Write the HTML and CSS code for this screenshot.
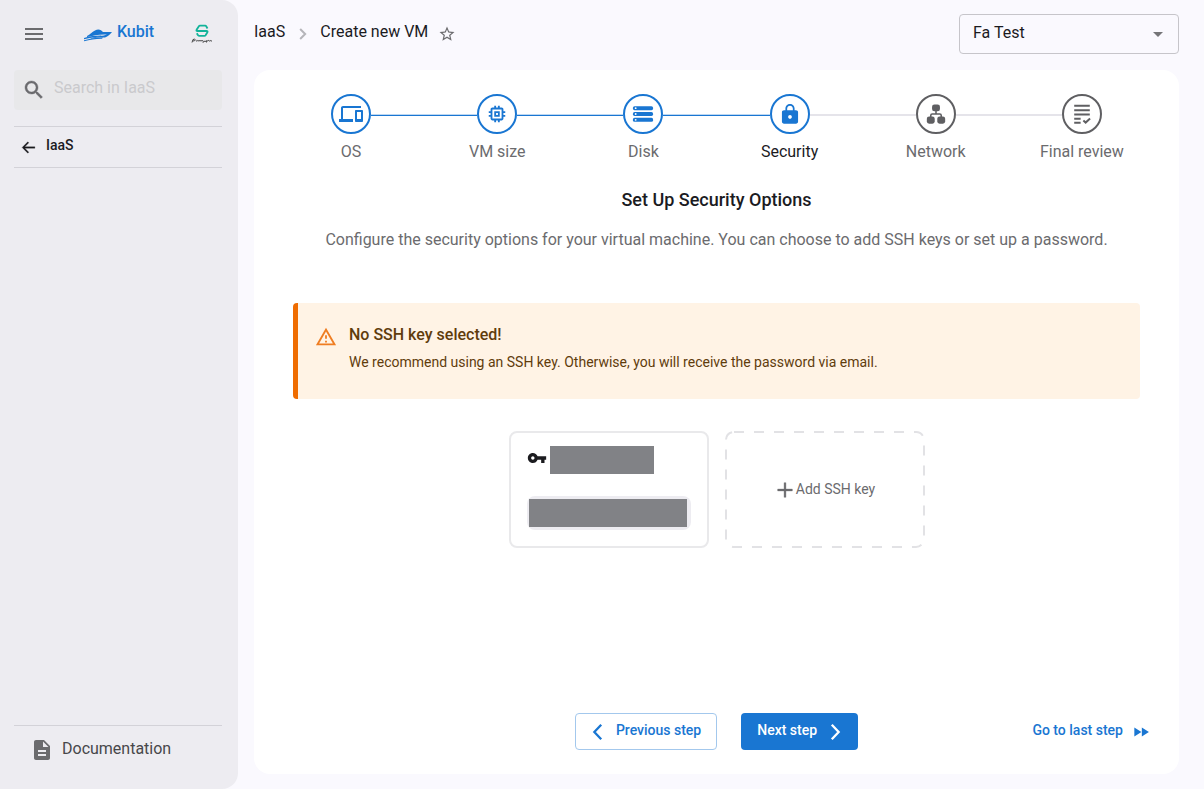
FILE: index.html
```html
<!DOCTYPE html>
<html lang="en">
<head>
<meta charset="utf-8">
<meta name="viewport" content="width=device-width, initial-scale=1">
<title>Create new VM</title>
<link rel="stylesheet" href="styles.css">
</head>
<body>
<div class="app">
  <aside class="sidebar">
    <div class="brand-bar">
      <button class="icon-button" type="button" aria-label="Toggle menu">
        <svg class="icon" viewBox="0 0 24 24"><path d="M3 18h18v-2H3zm0-5h18v-2H3zm0-7v2h18V6z"/></svg>
      </button>
      <a class="brand" href="#">
        <svg class="brand-mark" viewBox="0 0 30 14">
          <path d="M4 8C7 6.500 9 4 12 2.500C14 1.300 16 1 18 2.200L20 4L29 4C27 6.500 25 8.500 22 9.500C17 9.300 12 9.700 7 11L10 9.500C15 8.200 20 8 24 6.500C17 6 10 7.500 4 9Z"/>
          <path d="M1 10C7 8 12 7.600 18 7.500L19 8.400C13 8.500 7 9.700 1 11.200Z"/>
          <path d="M1 12.300C7 10.700 13 9.400 20 9.500L19 10.800C13 10.700 7 11.800 1 13.200Z"/>
        </svg>
        <span>Kubit</span>
      </a>
      <svg class="partner-mark" viewBox="0 0 22 20" role="img" aria-label="Partner">
        <path d="M16.500 4.500L15.200 2.200Q14.900 1.700 14.200 1.700H9Q8.300 1.700 7.900 2.300L5.600 5.800Q5 7 6.400 7H13.200M8.500 7H15.500Q17 7 16.400 8.300L14.600 11.200Q14.200 11.800 13.500 11.800H8Q7.300 11.800 7 11.200L5.800 9.300" fill="none" stroke="#12b39a" stroke-width="1.800"/>
        <path d="M1 18.500L2 15.500Q4 14.700 4.500 15.800Q4 17 2 17M5 17.300Q6.500 15.700 7 17.200Q8 15.800 9 17Q10 16 11 17Q12 16 12.500 17.300L12 18.800M13 17.300H15.500M16 16L15.500 18.500M16.500 17Q18 15.800 18.500 17Q20 16 21 17.300" fill="none" stroke="#333" stroke-width="0.900"/>
      </svg>
    </div>
    <label class="search">
      <svg class="icon" viewBox="0 0 24 24"><path d="M15.500 14h-.79l-.28-.27C15.410 12.590 16 11.110 16 9.500 16 5.910 13.090 3 9.500 3S3 5.910 3 9.500 5.910 16 9.500 16c1.610 0 3.090-.59 4.230-1.570l.27.28v.79l5 4.990L20.490 19zm-6 0C7.010 14 5 11.990 5 9.500S7.010 5 9.500 5 14 7.010 14 9.500 11.990 14 9.500 14" stroke="currentColor" stroke-width="0.400"/></svg>
      <input class="search-input" type="search" placeholder="Search in IaaS" aria-label="Search in IaaS">
    </label>
    <a class="back-link" href="#">
      <svg class="icon icon-back" viewBox="0 0 24 24"><path d="M21 11H6.830l5.580-5.590L11 4l-8 8 8 8 1.410-1.410L6.830 13H21z" stroke="currentColor" stroke-width="0.400"/></svg>
      <span>IaaS</span>
    </a>
    <a class="docs-link" href="#">
      <svg class="icon" viewBox="0 0 24 24"><path d="M14 2H6c-1.100 0-1.990.9-1.990 2L4 20c0 1.100.89 2 1.990 2H18c1.100 0 2-.9 2-2V8zm2 16H8v-2h8zm0-4H8v-2h8zm-3-5V3.500L18.500 9z"/></svg>
      <span>Documentation</span>
    </a>
  </aside>

  <main class="main">
    <header class="topbar">
      <nav class="crumbs" aria-label="Breadcrumb">
        <a href="#">IaaS</a>
        <svg class="icon crumb-sep" viewBox="0 0 24 24"><path d="M8.500 4.500L16 12L8.500 19.500" /></svg>
        <a href="#">Create new VM</a>
        <button class="icon-button star" type="button" aria-label="Add to favourites">
          <svg class="icon" viewBox="0 0 24 24"><path d="m22 9.240-7.190-.62L12 2 9.190 8.630 2 9.240l5.460 4.730L5.820 21 12 17.270 18.180 21l-1.630-7.030zM12 15.400l-3.760 2.270 1-4.280-3.320-2.880 4.380-.38L12 6.100l1.710 4.040 4.380.38-3.320 2.880 1 4.280z"/></svg>
        </button>
      </nav>
      <div class="project">
        <select class="project-select" aria-label="Project"><option>Fa Test</option></select>
        <svg class="icon project-arrow" viewBox="0 0 24 24"><path d="m7 10 5 5 5-5z"/></svg>
      </div>
    </header>

    <section class="card">
      <ol class="stepper">
        <li class="step done">
          <span class="step-circle"><svg class="icon step-icon-wide" viewBox="0 0 24 24"><path d="M4 6h18V4H4c-1.100 0-2 .9-2 2v11H0v3h14v-3H4zm19 2h-6c-.55 0-1 .45-1 1v10c0 .55.450 1 1 1h6c.55 0 1-.45 1-1V9c0-.55-.45-1-1-1m-1 9h-4v-7h4z"/></svg></span>
          <span class="step-label">OS</span>
        </li>
        <li class="step done">
          <span class="step-circle"><svg class="icon" viewBox="0 0 24 24"><path d="M15 9H9v6h6zm-2 4h-2v-2h2zm8-2V9h-2V7c0-1.100-.9-2-2-2h-2V3h-2v2h-2V3H9v2H7c-1.100 0-2 .9-2 2v2H3v2h2v2H3v2h2v2c0 1.100.9 2 2 2h2v2h2v-2h2v2h2v-2h2c1.100 0 2-.9 2-2v-2h2v-2h-2v-2zm-4 6H7V7h10z"/></svg></span>
          <span class="step-label">VM size</span>
        </li>
        <li class="step done">
          <span class="step-circle"><svg class="icon" viewBox="0 0 24 24"><rect x="1" y="3.500" width="22" height="4.300" rx="1.800"/><rect x="1" y="9.850" width="22" height="4.300" rx="1.800"/><rect x="1" y="16.200" width="22" height="4.300" rx="1.800"/><g fill="#fff"><circle cx="4" cy="5.650" r="1"/><circle cx="4" cy="12" r="1"/><circle cx="4" cy="18.350" r="1"/></g></svg></span>
          <span class="step-label">Disk</span>
        </li>
        <li class="step current" aria-current="step">
          <span class="step-circle"><svg class="icon" viewBox="0 0 24 24"><path d="M18.500 8H17V6c0-2.760-2.240-5-5-5S7 3.240 7 6v2H5.500c-1.300 0-2.300.9-2.300 2v10.500c0 1.100 1 2 2.300 2h13c1.300 0 2.300-.9 2.300-2V10c0-1.100-1-2-2.300-2M12 17.200c-1.100 0-2-.9-2-2s.9-2 2-2 2 .9 2 2-.9 2-2 2M15.100 8H8.900V6c0-1.710 1.390-3.100 3.100-3.100s3.100 1.390 3.100 3.100z"/></svg></span>
          <span class="step-label">Security</span>
        </li>
        <li class="step">
          <span class="step-circle"><svg class="icon" viewBox="0 0 24 24"><rect x="7.700" y="1.500" width="8.600" height="7.500" rx="2.500"/><rect x="2" y="14.800" width="8.600" height="7.700" rx="2.500"/><rect x="13.400" y="14.800" width="8.600" height="7.700" rx="2.500"/><path d="M12 8V12M6.300 16V13.500Q6.300 12 7.800 12H16.200Q17.700 12 17.700 13.500V16" fill="none" stroke="currentColor" stroke-width="1.700"/></svg></span>
          <span class="step-label">Network</span>
        </li>
        <li class="step">
          <span class="step-circle"><svg class="icon" viewBox="0 0 24 24"><path d="M3.500 3H20.500M3.500 7.800H20.500M3.500 12.600H20.500M3.500 17.200H10.500M3.500 21.500H10.500M13.500 19L16 21.300L20.800 17" fill="none" stroke="currentColor" stroke-width="2.200"/></svg></span>
          <span class="step-label">Final review</span>
        </li>
      </ol>

      <h1 class="title">Set Up Security Options</h1>
      <p class="lead">Configure the security options for your virtual machine. You can choose to add SSH keys or set up a password.</p>

      <div class="alert" role="status">
        <svg class="icon alert-icon" viewBox="0 0 24 24"><path d="M12 5.990 19.530 19H4.470zM12 2 1 21h22zm1 14h-2v2h2zm0-6h-2v4h2z"/></svg>
        <div>
          <h2 class="alert-title">No SSH key selected!</h2>
          <p class="alert-text">We recommend using an SSH key. Otherwise, you will receive the password via email.</p>
        </div>
      </div>

      <div class="keys">
        <button class="key-card" type="button" aria-label="Saved SSH key">
          <span class="key-head">
            <svg class="icon key-icon" viewBox="0 0 24 24"><path d="M12.650 10C11.830 7.670 9.610 6 7 6c-3.310 0-6 2.690-6 6s2.690 6 6 6c2.610 0 4.830-1.670 5.650-4H17v4h4v-4h2v-4zM7 14c-1.100 0-2-.9-2-2s.9-2 2-2 2 .9 2 2-.9 2-2 2"/></svg>
            <span class="mask mask-name"></span>
          </span>
          <span class="key-chip"><span class="mask"></span></span>
        </button>
        <button class="key-add" type="button">
          <svg class="key-add-outline" aria-hidden="true"><rect class="key-add-rect" x="1" y="1" rx="8"/></svg>
          <svg class="icon key-add-plus" viewBox="0 0 24 24"><path d="M20 13h-7v7h-2v-7H4v-2h7V4h2v7h7z" stroke="currentColor" stroke-width="0.400"/></svg>
          <span>Add SSH key</span>
        </button>
      </div>

      <footer class="actions">
        <div class="actions-main">
          <button class="btn btn-outline" type="button">
            <svg class="icon chevron" viewBox="0 0 24 24"><path d="M15.500 4L8 12L15.500 20"/></svg>
            <span>Previous step</span>
          </button>
          <button class="btn btn-solid" type="button">
            <span>Next step</span>
            <svg class="icon chevron" viewBox="0 0 24 24"><path d="M8.500 4L16 12L8.500 20"/></svg>
          </button>
        </div>
        <button class="btn btn-text" type="button">
          <span>Go to last step</span>
          <svg class="icon" viewBox="0 0 24 24"><path d="m4 17.500 8.500-5.500-8.500-5.500zm9-11v11l8.500-5.500z"/></svg>
        </button>
      </footer>
    </section>
  </main>
</div>
</body>
</html>
```

FILE: styles.css
```css
*,
*::before {
  box-sizing: border-box;
}

body {
  margin: 0;
  background: #faf9fe;
  color: #1b1b1f;
  font: 400 16px/24px Roboto, "Liberation Sans", sans-serif;
}

h1, h2, p, ol {
  margin: 0;
  padding: 0;
}

a {
  color: inherit;
  text-decoration: none;
}

button, input, select {
  font: inherit;
  color: inherit;
}

button {
  padding: 0;
  border: 0;
  background: none;
  cursor: pointer;
}

.icon {
  display: block;
  flex: none;
  width: 24px;
  height: 24px;
  fill: currentColor;
}

.app {
  display: flex;
  min-height: 100vh;
}

/* Sidebar */
.sidebar {
  display: flex;
  flex: none;
  flex-direction: column;
  width: 238px;
  padding: 0 16px 0 14px;
  border-radius: 0 16px 16px 0;
  background: #edecf1;
}

.brand-bar {
  display: flex;
  align-items: center;
  justify-content: space-between;
  height: 70px;
  padding: 0 9px 2px 8px;
}

.icon-button {
  display: flex;
  color: #6b6b6e;
}

.brand {
  display: flex;
  align-items: center;
  gap: 4px;
  padding: 0 0 4px;
  color: #1976d2;
  font-weight: 500;
}

.brand-mark {
  width: 30px;
  height: 14px;
  margin-top: 5px;
  fill: currentColor;
}

.partner-mark {
  width: 22px;
  height: 20px;
}

.search {
  display: flex;
  align-items: center;
  gap: 8px;
  height: 40px;
  padding: 0 8px;
  border-radius: 4px;
  background: #e8e8ea;
  color: #6b6b6e;
}

.search-input {
  flex: 1;
  min-width: 0;
  padding: 0 0 4px;
  border: 0;
  outline: 0;
  background: none;
}

.search-input::placeholder {
  color: #cacacd;
  opacity: 1;
}

.back-link {
  display: flex;
  align-items: center;
  gap: 9px;
  height: 42px;
  margin-top: 16px;
  padding: 0 6px;
  border: solid #d3d2d8;
  border-width: 1px 0;
  font-size: 14px;
  font-weight: 500;
}

.back-link span {
  padding-bottom: 4px;
}

.docs-link span {
  padding-bottom: 3px;
}

.icon-back {
  width: 17px;
  height: 17px;
}

.docs-link {
  display: flex;
  align-items: center;
  gap: 8px;
  height: 64px;
  margin-top: auto;
  padding: 0 16px 15px;
  border-top: 1px solid #d3d2d8;
  color: #47474a;
}

.docs-link .icon {
  color: #6b6b6e;
}

/* Main column */
.main {
  display: flex;
  flex: 1;
  flex-direction: column;
  gap: 16px;
  min-width: 0;
  padding: 14px 25px 15px 16px;
}

.topbar {
  display: flex;
  align-items: center;
  justify-content: space-between;
}

.crumbs {
  display: flex;
  align-items: center;
  gap: 8px;
}

.crumbs a {
  padding-bottom: 4px;
}

.crumb-sep {
  width: 19px;
  height: 16px;
  fill: none;
  stroke: #b5b5ba;
  stroke-width: 3;
}

.star {
  margin-left: 2px;
}

.star .icon {
  width: 18px;
  height: 18px;
}

.project {
  position: relative;
  width: 220px;
}

.project-select {
  width: 100%;
  height: 40px;
  padding: 0 36px 3px 13px;
  border: 1px solid #c6c5ca;
  border-radius: 4px;
  background: transparent;
  appearance: none;
}

.project-arrow {
  position: absolute;
  top: 8px;
  right: 9px;
  color: #757578;
  pointer-events: none;
}

.card {
  display: flex;
  flex: 1;
  flex-direction: column;
  padding: 24px;
  border-radius: 16px;
  background: #fff;
}

/* Stepper */
.stepper {
  display: grid;
  grid-template-columns: repeat(6, 1fr);
  list-style: none;
}

.step {
  display: flex;
  position: relative;
  flex-direction: column;
  align-items: center;
  gap: 6px;
  color: #5f5f62;
}

.step + .step::before {
  position: absolute;
  top: 20px;
  right: calc(50% + 20px);
  left: calc(20px - 50%);
  height: 2px;
  background: #e5e4ea;
  content: "";
}

.step.done::before,
.step.current::before {
  border-top: 1px solid #bcd7f2;
  border-bottom: 1px solid #1976d2;
}

.step-circle {
  display: flex;
  align-items: center;
  justify-content: center;
  width: 40px;
  height: 40px;
  border: 2px solid currentColor;
  border-radius: 50%;
}

.step-circle .icon {
  width: 22px;
  height: 22px;
}

.step-circle .step-icon-wide {
  width: 24px;
  height: 24px;
}

.done .step-circle,
.current .step-circle {
  color: #1976d2;
}

.step-label {
  color: #6b6b6e;
}

.current .step-label {
  color: #1b1b1f;
}

.title {
  margin-top: 24px;
  font-size: 18px;
  font-weight: 500;
  line-height: 24px;
  text-align: center;
}

.lead {
  margin-top: 16px;
  color: #6b6b6e;
  text-align: center;
}

/* Alert */
.alert {
  display: flex;
  gap: 12px;
  min-height: 96px;
  margin: 51px 15px 0;
  padding: 20px 17px;
  border-left: 5px solid #ef6c00;
  border-radius: 4px;
  background: #fff3e5;
  color: #5f3c0c;
}

.alert-icon {
  width: 22px;
  height: 22px;
  margin-top: 3px;
  color: #ef7d22;
}

.alert-title {
  font-size: 16px;
  font-weight: 500;
  line-height: 24px;
}

.alert-text {
  margin-top: 3px;
  font-size: 14px;
  line-height: 24px;
}

/* SSH keys */
.keys {
  display: flex;
  flex-wrap: wrap;
  justify-content: center;
  gap: 16px;
  margin: 32px 0;
}

.key-card,
.key-add {
  width: 200px;
  min-height: 117px;
  border-radius: 8px;
}

.key-card {
  display: flex;
  flex-direction: column;
  gap: 22px;
  padding: 13px 16px;
  border: 2px solid #e9e9eb;
}

.key-head {
  display: flex;
  align-items: center;
  gap: 3px;
}

.key-icon {
  width: 20px;
  height: 20px;
  margin-bottom: 4px;
}

.mask {
  display: block;
  height: 28px;
  background: #818286;
}

.mask-name {
  width: 104px;
}

.key-chip {
  width: 100%;
  padding: 3px 4px 3px 2px;
  border-radius: 8px;
  background: #edecf1;
}

.key-add {
  display: flex;
  position: relative;
  align-items: center;
  justify-content: center;
  color: #6b6b6e;
  font-size: 14px;
}

.key-add span {
  padding-bottom: 2px;
}

.key-add-plus {
  width: 22px;
  height: 22px;
}

.key-add-outline {
  position: absolute;
  inset: 0;
  width: 100%;
  height: 100%;
}

.key-add-rect {
  width: calc(100% - 2px);
  height: calc(100% - 2px);
  fill: none;
  stroke: #e2e2e5;
  stroke-width: 2;
  stroke-dasharray: 10 10;
}

/* Footer actions */
.actions {
  display: grid;
  grid-template-columns: 1fr auto 1fr;
  align-items: center;
  margin-top: auto;
}

.actions-main {
  display: flex;
  grid-column: 2;
  gap: 24px;
}

.btn {
  display: flex;
  align-items: center;
  height: 37px;
  border-radius: 4px;
  color: #1976d2;
  font-size: 14px;
  font-weight: 500;
}

.btn span {
  padding-bottom: 3px;
}

.btn-outline {
  gap: 7px;
  padding: 0 15px 0 11px;
  border: 1px solid #a3c8ed;
}

.btn-solid {
  gap: 7px;
  padding: 0 12px 0 16px;
  background: #1976d2;
  color: #fff;
}

.btn-text {
  gap: 8px;
  justify-self: end;
  padding: 0 4px;
}

.btn-text .icon {
  width: 20px;
  height: 20px;
}

.chevron {
  width: 22px;
  height: 22px;
  fill: none;
  stroke: currentColor;
  stroke-width: 2.500;
}
```
